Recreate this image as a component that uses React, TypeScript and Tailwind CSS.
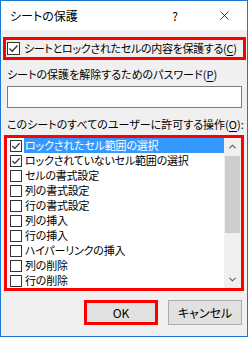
import { ChevronUp, ChevronDown, X } from 'lucide-react'

const items = [
  { label: 'ロックされたセル範囲の選択', checked: true, selected: true },
  { label: 'ロックされていないセル範囲の選択', checked: true },
  { label: 'セルの書式設定' },
  { label: '列の書式設定' },
  { label: '行の書式設定' },
  { label: '列の挿入' },
  { label: '行の挿入' },
  { label: 'ハイパーリンクの挿入' },
  { label: '列の削除' },
  { label: '行の削除' },
]

function Check({ checked, size }: { checked?: boolean; size: number }) {
  return (
    <div
      className="shrink-0 border border-[#333] bg-white flex items-center justify-center"
      style={{ width: size, height: size }}
    >
      {checked && (
        <svg width={size - 2} height={size - 2} viewBox="0 0 11 11" fill="none" stroke="#333" strokeWidth="1.3">
          <path d="M1.5 5.5L4.2 8.2L9.5 2.5" />
        </svg>
      )}
    </div>
  )
}

export default function App() {
  return (
    <div className="w-[249px] h-[339px] bg-white text-[11px] leading-[15px] text-black whitespace-nowrap font-['Noto_Sans_CJK_JP',sans-serif] [font-feature-settings:'palt']">
      <div className="w-[248px] h-[337px] border border-[#1a78d4] bg-[#f0f0f0] flex flex-col">
        {/* Title bar */}
        <div className="h-[29px] bg-white flex items-center pl-[9px] shrink-0 text-[12px]">
          <span>シートの保護</span>
          <span className="ml-auto w-[10px] text-center">?</span>
          <X size={15} strokeWidth={1.2} className="ml-[37px] mr-[15px]" />
        </div>

        {/* Protect checkbox */}
        <div className="mt-[7px] ml-[2px] w-[243px] h-[23px] border-[3px] border-[#ff0000] flex items-center pl-[1px] gap-[4px]">
          <Check checked size={13} />
          <span className="tracking-[-0.3px]">
            シートとロックされたセルの内容を保護する(<span className="underline underline-offset-2">C</span>)
          </span>
        </div>

        {/* Password */}
        <div className="mt-[7px] ml-[6px]">
          シートの保護を解除するためのパスワード(<span className="underline underline-offset-2">P</span>)
        </div>
        <div className="mt-[4px] ml-[6px] w-[235px] h-[22px] bg-white border border-[#7a7a7a]" />

        {/* Permission list */}
        <div className="mt-[9px] ml-[6px]">
          このシートのすべてのユーザーに許可する操作(<span className="underline underline-offset-2">O</span>):
        </div>
        <div className="mt-[3px] ml-[3px] w-[240px] h-[156px] border-[3px] border-[#ff0000] bg-white flex">
          <div className="flex-1 flex flex-col">
            {items.map((it) => (
              <div key={it.label} className="h-[15px] flex items-center pl-[3px]">
                <Check checked={it.checked} size={12} />
                <span
                  className={`ml-[2px] flex-1 h-[15px] pl-[1px] overflow-hidden tracking-[-0.2px] ${
                    it.selected ? 'bg-[#3399ff] text-white' : ''
                  }`}
                >
                  {it.label}
                </span>
              </div>
            ))}
          </div>
          <div className="w-[17px] bg-[#f0f0f0] flex flex-col items-center">
            <ChevronUp size={11} strokeWidth={2.5} className="mt-[3px] text-[#606060]" />
            <div className="mt-[4px] w-[15px] h-[77px] bg-[#cdcdcd]" />
            <ChevronDown size={11} strokeWidth={2.5} className="mt-auto mb-[3px] text-[#606060]" />
          </div>
        </div>

        {/* Buttons */}
        <div className="mt-[9px] flex justify-end gap-[10px] pr-[5px] text-[12px]">
          <button className="w-[74px] h-[25px] bg-[#e1e1e1] border-[3px] border-[#ff0000]">OK</button>
          <button className="w-[74px] h-[25px] bg-[#e1e1e1] border border-[#adadad]">キャンセル</button>
        </div>
      </div>
    </div>
  )
}
